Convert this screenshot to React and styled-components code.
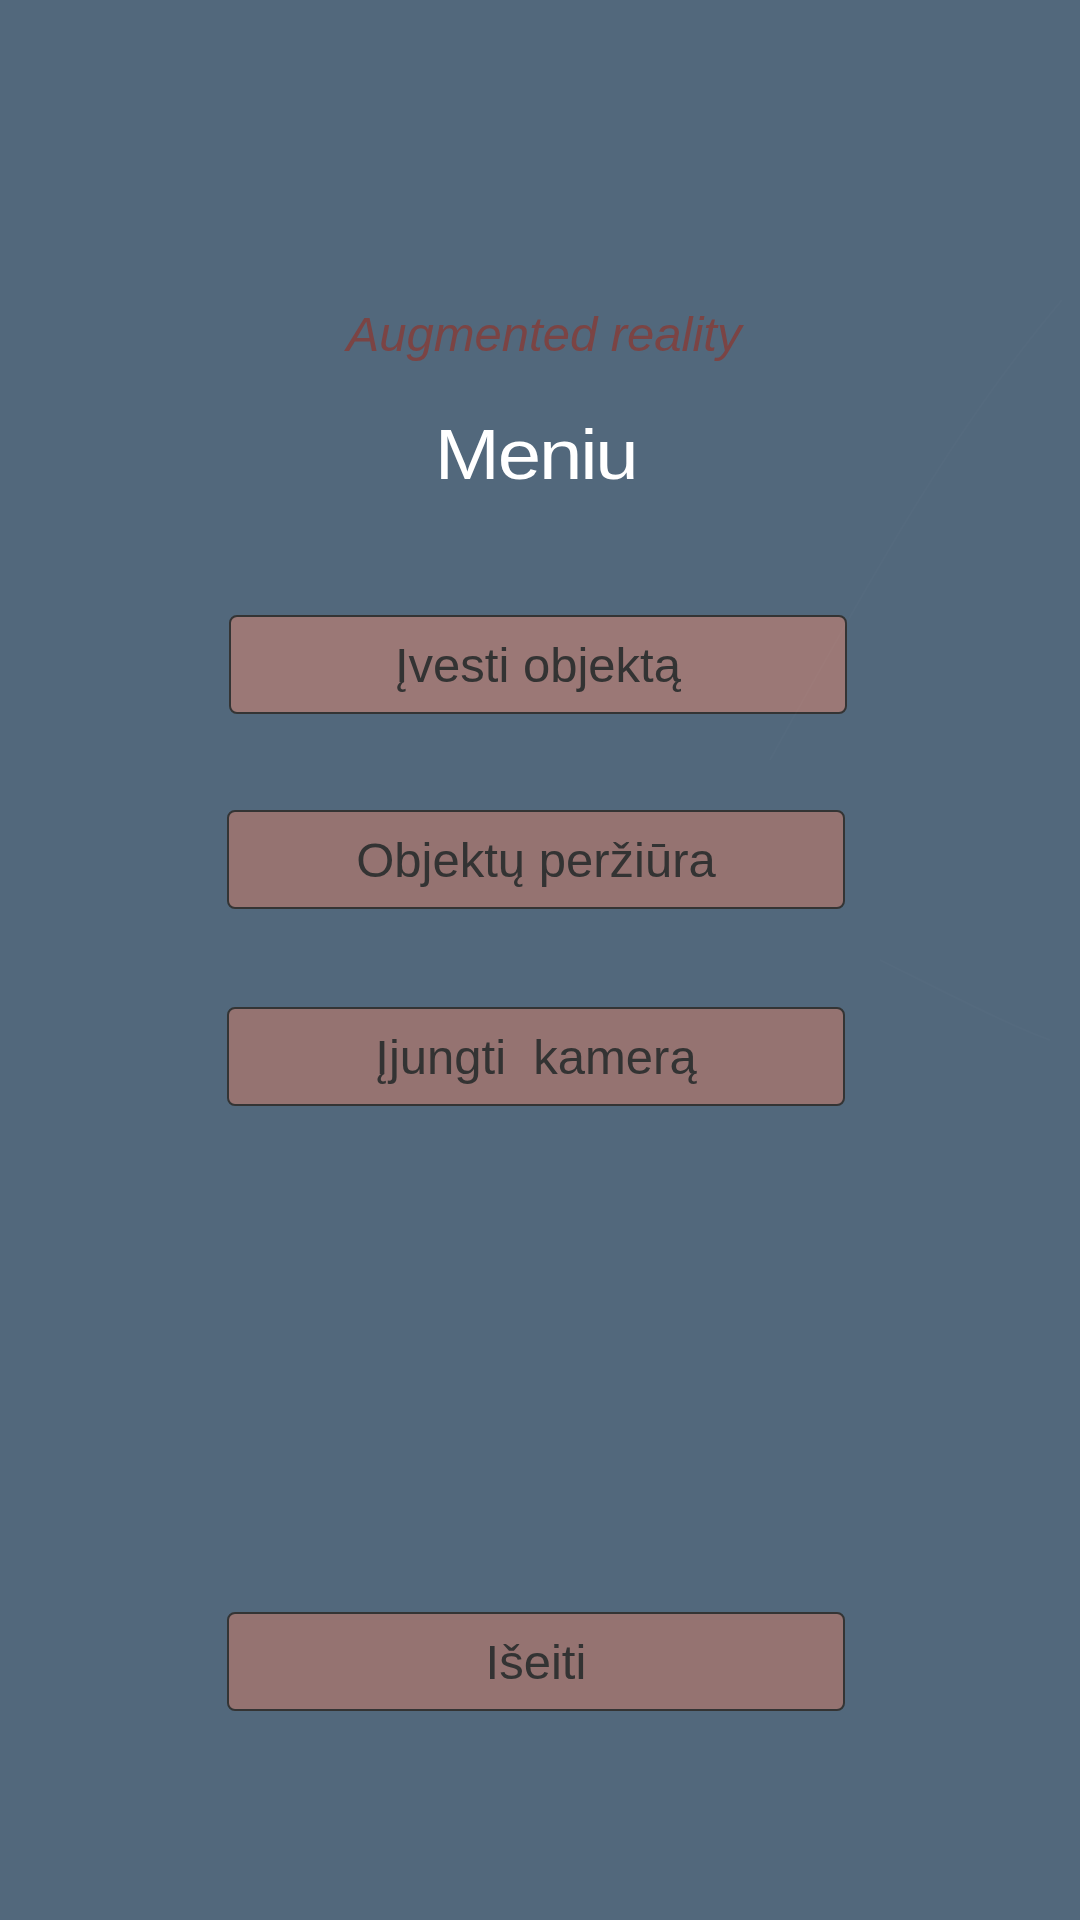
import styled, { createGlobalStyle } from 'styled-components'

const GlobalStyle = createGlobalStyle`
  html, body {
    margin: 0;
    padding: 0;
    background: #52687c;
  }
  * {
    box-sizing: border-box;
  }
`

const Screen = styled.div`
  position: relative;
  width: 1080px;
  height: 1920px;
  overflow: hidden;
  background: #52687c;
  font-family: 'Liberation Sans', Arial, sans-serif;
  display: flex;
  flex-direction: column;
  align-items: center;
  padding: 310px 8px 0 0;
`

const Backdrop = styled.svg`
  position: absolute;
  top: 0;
  left: 0;
  width: 1080px;
  height: 1920px;
  pointer-events: none;
`

const Subtitle = styled.div`
  font-size: 49px;
  line-height: 1;
  font-style: italic;
  color: #7b4444;
  margin-left: 16px;
  white-space: nowrap;
`

const Title = styled.h1`
  margin: 60px 0 0 0;
  font-size: 71px;
  line-height: 1;
  font-weight: normal;
  color: #ffffff;
  letter-spacing: -2px;
  transform: scaleX(1.1);
`

const Menu = styled.div`
  display: flex;
  flex-direction: column;
  align-items: center;
  margin-top: 125px;
`

const MenuButton = styled.button`
  width: 618px;
  height: 99px;
  margin-top: ${p => p.gap}px;
  margin-left: ${p => (p.active ? 4 : 0)}px;
  border: 2px solid #343434;
  border-radius: 8px;
  background: ${p => (p.active ? '#9b7876' : '#957371')};
  color: #333333;
  font-family: 'Liberation Sans', Arial, sans-serif;
  font-size: 49px;
  white-space: pre;
  display: flex;
  align-items: center;
  justify-content: center;
  padding: 0;
  cursor: pointer;
`

const items = [
  { label: 'Įvesti objektą', gap: 0, active: true },
  { label: 'Objektų peržiūra', gap: 96 },
  { label: 'Įjungti  kamerą', gap: 98 },
  { label: 'Išeiti', gap: 506 }
]

function App () {
  return (
    <>
      <GlobalStyle />
      <Screen>
        <Backdrop viewBox='0 0 1080 1920'>
          <path
            d='M1062 300 C 960 420, 880 560, 770 760 M880 960 C 960 1000, 1020 1030, 1050 1040'
            stroke='#ffffff'
            strokeOpacity='0.015'
            strokeWidth='2'
            fill='none'
          />
        </Backdrop>
        <Subtitle>Augmented reality</Subtitle>
        <Title>Meniu</Title>
        <Menu>
          {items.map(item => (
            <MenuButton key={item.label} gap={item.gap} active={item.active}>
              {item.label}
            </MenuButton>
          ))}
        </Menu>
      </Screen>
    </>
  )
}

export default App
